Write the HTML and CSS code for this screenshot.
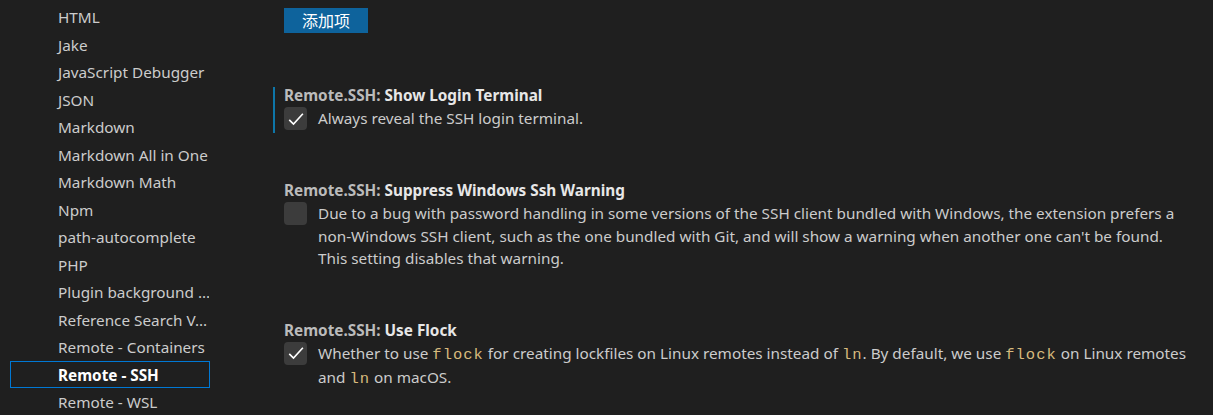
FILE: index.html
```html
<!DOCTYPE html>
<html lang="zh-CN">
<head>
<meta charset="utf-8">
<link rel="stylesheet" href="styles.css">
</head>
<body>
<nav class="toc">
  <div class="toc-item">HTML</div>
  <div class="toc-item">Jake</div>
  <div class="toc-item">JavaScript Debugger</div>
  <div class="toc-item">JSON</div>
  <div class="toc-item">Markdown</div>
  <div class="toc-item">Markdown All in One</div>
  <div class="toc-item">Markdown Math</div>
  <div class="toc-item">Npm</div>
  <div class="toc-item">path-autocomplete</div>
  <div class="toc-item">PHP</div>
  <div class="toc-item">Plugin background ...</div>
  <div class="toc-item">Reference Search V...</div>
  <div class="toc-item">Remote - Containers</div>
  <div class="toc-item selected">Remote - SSH</div>
  <div class="toc-item">Remote - WSL</div>
</nav>
<main class="settings">
  <div class="add-btn">添加项</div>

  <section class="setting focused">
    <div class="title"><span class="cat">Remote.SSH: </span>Show Login Terminal</div>
    <div class="row">
      <span class="checkbox checked"><svg viewBox="0 0 16 16" width="20" height="20"><path d="M2.6 8.7 L6 12.1 L13.5 3.8" fill="none" stroke="#ffffff" stroke-width="1.3"/></svg></span>
      <p class="desc">Always reveal the SSH login terminal.</p>
    </div>
  </section>

  <section class="setting">
    <div class="title"><span class="cat">Remote.SSH: </span>Suppress Windows Ssh Warning</div>
    <div class="row">
      <span class="checkbox"></span>
      <p class="desc">Due to a bug with password handling in some versions of the SSH client bundled with Windows, the extension prefers a non-Windows SSH client, such as the one bundled with Git, and will show a warning when another one can't be found. This setting disables that warning.</p>
    </div>
  </section>

  <section class="setting">
    <div class="title"><span class="cat">Remote.SSH: </span>Use Flock</div>
    <div class="row">
      <span class="checkbox checked"><svg viewBox="0 0 16 16" width="20" height="20"><path d="M2.6 8.7 L6 12.1 L13.5 3.8" fill="none" stroke="#ffffff" stroke-width="1.3"/></svg></span>
      <p class="desc">Whether to use <code>flock</code> for creating lockfiles on Linux remotes instead of <code>ln</code>. By default, we use <code>flock</code> on Linux remotes and <code>ln</code> on macOS.</p>
    </div>
  </section>
</main>
</body>
</html>
```

FILE: styles.css
```css
html, body {
  margin: 0;
  padding: 0;
  background: #1f1f1f;
  height: 100%;
  overflow: hidden;
}
body {
  display: flex;
  font-family: "Noto Sans", "Noto Sans CJK SC", sans-serif;
  font-size: 15.3px;
  color: #cccccc;
}
.toc {
  width: 200px;
  flex: none;
  padding: 3.25px 0 0 10px;
}
.toc-item {
  height: 27.5px;
  line-height: 27px;
  padding-left: 47px;
  box-sizing: border-box;
  white-space: nowrap;
  overflow: hidden;
  color: #cccccc;
  border: 1px solid transparent;
}
.toc-item.selected {
  border-color: #0078d4;
  color: #ffffff;
  font-weight: 700;
}
.settings {
  flex: 1;
  padding: 8px 25px 0 63px;
  display: flex;
  flex-direction: column;
  align-items: flex-start;
}
.add-btn {
  flex: none;
  margin-left: 11px;
  width: 84px;
  height: 25px;
  line-height: 25px;
  text-align: center;
  background: #0e639c;
  color: #ffffff;
  font-family: "Noto Sans CJK SC", sans-serif;
  font-size: 16px;
  margin-bottom: 54px;
}
.setting {
  border-left: 2px solid transparent;
  padding: 0 0 3px 9px;
  margin-bottom: 49px;
  align-self: stretch;
}
.setting.focused {
  border-left-color: #0e76a8;
}
.title {
  line-height: 16px;
  font-weight: 700;
  color: #e7e7e7;
  margin-bottom: 4px;
}
.cat {
  color: #bbbbbb;
}
.row {
  display: flex;
  align-items: flex-start;
}
.checkbox {
  flex: none;
  width: 23px;
  height: 23px;
  border-radius: 4px;
  background: #3c3c3c;
  margin-right: 11px;
  display: flex;
  align-items: center;
  justify-content: center;
}
.desc {
  margin: 0;
  line-height: 22.5px;
  color: #cccccc;
}
code {
  font-family: "Liberation Mono", monospace;
  font-size: 15.5px;
  letter-spacing: 1px;
  color: #d7ba7d;
}
```
